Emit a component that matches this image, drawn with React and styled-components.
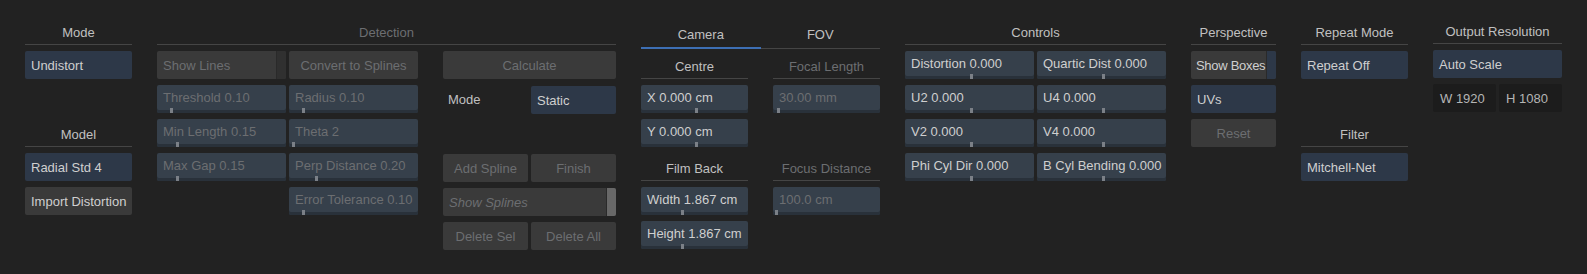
import React from "react";
import styled, { createGlobalStyle } from "styled-components";

const GlobalStyle = createGlobalStyle`
  html, body {
    margin: 0;
    padding: 0;
    background: #222222;
  }
  body {
    font-family: "Liberation Sans", Arial, sans-serif;
    font-size: 13px;
    color: #d0d0d0;
  }
`;

const C = {
  blue: "#2d3848",
  gray: "#3a3a3a",
  slider: "#36404b",
  track: "#29313a",
  text: "#cfcfcf",
  label: "#c0c0c0",
  dim: "#6c6e71",
  line: "#454545",
};

const Page = styled.div`
  display: flex;
  align-items: flex-start;
  gap: 25px;
  padding: 22px 25px 0;
  min-height: 274px;
  box-sizing: border-box;
`;

const Section = styled.div`
  width: ${(p) => p.$w}px;
  display: flex;
  flex-direction: column;
  gap: 6px;
  margin-top: ${(p) => p.$shift || 0}px;
`;

const Header = styled.div`
  line-height: 20px;
  padding-top: 1px;
  padding-bottom: 1px;
  border-bottom: 1px solid ${C.line};
  text-align: center;
  color: ${(p) => (p.$dim ? C.dim : C.label)};
  margin-top: ${(p) => p.$mt || 0}px;
  white-space: nowrap;
`;

const Column = styled.div`
  width: ${(p) => p.$w}px;
  display: flex;
  flex-direction: column;
  gap: 6px;
`;

const Columns = styled.div`
  display: flex;
  gap: ${(p) => p.$gap}px;
  padding-top: ${(p) => p.$pt || 0}px;
`;

const Button = styled.div`
  height: 28px;
  line-height: 29px;
  border-radius: 2px;
  padding: 0 6px;
  box-sizing: border-box;
  background: ${(p) => (p.$tone === "blue" ? C.blue : C.gray)};
  color: ${(p) => (p.$dim ? C.dim : C.text)};
  text-align: ${(p) => (p.$center ? "center" : "left")};
  white-space: nowrap;
  overflow: hidden;
  flex: ${(p) => (p.$grow ? 1 : "none")};
  width: ${(p) => (p.$w ? `${p.$w}px` : "auto")};
`;

const Toggle = styled.div`
  height: 28px;
  display: flex;
  border-radius: 2px;
  overflow: hidden;
  background: ${C.gray};
`;

const ToggleLabel = styled.div`
  flex: 1;
  line-height: 29px;
  padding: 0 ${(p) => (p.$tight ? "0 0 5px" : "6px")};
  letter-spacing: ${(p) => (p.$tight ? "-0.3px" : "0")};
  white-space: nowrap;
  overflow: hidden;
  color: ${(p) => (p.$dim ? C.dim : C.text)};
  font-style: ${(p) => (p.$italic ? "italic" : "normal")};
`;

const ToggleIndicator = styled.div`
  width: 9px;
  flex: none;
  border-left: 1px solid #2a2a2a;
  background: ${(p) => p.$color};
`;

const Slider = styled.div`
  position: relative;
  height: 28px;
  border-radius: 2px;
  background: ${C.slider};
  box-shadow: inset 0 -3px 0 ${C.track};
  padding: 0 6px;
  box-sizing: border-box;
  overflow: hidden;
`;

const SliderText = styled.div`
  line-height: 26px;
  white-space: nowrap;
  color: ${(p) => (p.$dim ? C.dim : C.text)};
`;

const Handle = styled.div`
  position: absolute;
  bottom: 0;
  width: 3px;
  height: 5px;
  background: #7b8087;
`;

const Row = styled.div`
  display: flex;
  gap: 3px;
  justify-content: space-between;
  align-items: center;
`;

const InlineLabel = styled.div`
  line-height: 29px;
  padding-left: 5px;
  color: ${C.label};
`;

const Spacer = styled.div`
  height: 28px;
`;

const TabBar = styled.div`
  display: flex;
  box-shadow: inset 0 -1px 0 ${C.line};
`;

const Tab = styled.div`
  flex: 1;
  text-align: center;
  padding: 3px 0 2px;
  line-height: 20px;
  color: ${C.label};
  border-bottom: 2px solid ${(p) => (p.$active ? "#3d6fb4" : "transparent")};
`;

const ControlsGrid = styled.div`
  display: grid;
  grid-template-columns: 129px 129px;
  column-gap: 3px;
  row-gap: 6px;
`;

const ResBox = styled.div`
  flex: 1;
  height: 28px;
  line-height: 29px;
  padding: 0 7px;
  border-radius: 2px;
  background: #1c1c1c;
  color: #b5b5b5;
`;

function ValueSlider({ label, value, dim }) {
  return (
    <Slider>
      <SliderText $dim={dim}>{label}</SliderText>
      <Handle style={{ left: `${value * 100}%` }} />
    </Slider>
  );
}

const detectionA = [
  ["Threshold 0.10", 0.1],
  ["Min Length 0.15", 0.15],
  ["Max Gap 0.15", 0.15],
];
const detectionB = [
  ["Radius 0.10", 0.1],
  ["Theta 2", 0.02],
  ["Perp Distance 0.20", 0.2],
  ["Error Tolerance 0.10", 0.1],
];
const controls = [
  "Distortion 0.000",
  "Quartic Dist 0.000",
  "U2 0.000",
  "U4 0.000",
  "V2 0.000",
  "V4 0.000",
  "Phi Cyl Dir 0.000",
  "B Cyl Bending 0.000",
];

export default function App() {
  return (
    <>
      <GlobalStyle />
      <Page>
        <Section $w={107}>
          <Header>Mode</Header>
          <Button $tone="blue">Undistort</Button>
          <Header $mt={39}>Model</Header>
          <Button $tone="blue">Radial Std 4</Button>
          <Button $center>Import Distortion</Button>
        </Section>

        <Section $w={459}>
          <Header $dim>Detection</Header>
          <Columns $gap={25}>
            <Columns $gap={3}>
              <Column $w={129}>
                <Toggle>
                  <ToggleLabel $dim>Show Lines</ToggleLabel>
                  <ToggleIndicator $color="#303030" />
                </Toggle>
                {detectionA.map(([l, v]) => (
                  <ValueSlider key={l} label={l} value={v} dim />
                ))}
              </Column>
              <Column $w={129}>
                <Button $center $dim>
                  Convert to Splines
                </Button>
                {detectionB.map(([l, v]) => (
                  <ValueSlider key={l} label={l} value={v} dim />
                ))}
              </Column>
            </Columns>
            <Column $w={173}>
              <Button $center $dim>
                Calculate
              </Button>
              <Row>
                <InlineLabel>Mode</InlineLabel>
                <Button $tone="blue" $w={85}>
                  Static
                </Button>
              </Row>
              <Spacer />
              <Row>
                <Button $center $dim $grow>
                  Add Spline
                </Button>
                <Button $center $dim $grow>
                  Finish
                </Button>
              </Row>
              <Toggle>
                <ToggleLabel $dim $italic>
                  Show Splines
                </ToggleLabel>
                <ToggleIndicator $color="#686868" />
              </Toggle>
              <Row>
                <Button $center $dim $grow>
                  Delete Sel
                </Button>
                <Button $center $dim $grow>
                  Delete All
                </Button>
              </Row>
            </Column>
          </Columns>
        </Section>

        <Section $w={239}>
          <TabBar>
            <Tab $active>Camera</Tab>
            <Tab>FOV</Tab>
          </TabBar>
          <Columns $gap={25} $pt={1}>
            <Column $w={107}>
              <Header>Centre</Header>
              <ValueSlider label="X 0.000 cm" value={0.5} />
              <ValueSlider label="Y 0.000 cm" value={0.5} />
              <Header $mt={5}>Film Back</Header>
              <ValueSlider label="Width 1.867 cm" value={0.37} />
              <ValueSlider label="Height 1.867 cm" value={0.37} />
            </Column>
            <Column $w={107}>
              <Header $dim>Focal Length</Header>
              <ValueSlider label="30.00 mm" value={0.04} dim />
              <Header $dim $mt={39}>
                Focus Distance
              </Header>
              <ValueSlider label="100.0 cm" value={0.015} dim />
            </Column>
          </Columns>
        </Section>

        <Section $w={261}>
          <Header>Controls</Header>
          <ControlsGrid>
            {controls.map((l) => (
              <ValueSlider key={l} label={l} value={0.5} />
            ))}
          </ControlsGrid>
        </Section>

        <Section $w={85}>
          <Header>Perspective</Header>
          <Toggle>
            <ToggleLabel $tight>Show Boxes</ToggleLabel>
            <ToggleIndicator $color={C.blue} />
          </Toggle>
          <Button $tone="blue">UVs</Button>
          <Button $center $dim>
            Reset
          </Button>
        </Section>

        <Section $w={107}>
          <Header>Repeat Mode</Header>
          <Button $tone="blue">Repeat Off</Button>
          <Header $mt={39}>Filter</Header>
          <Button $tone="blue">Mitchell-Net</Button>
        </Section>

        <Section $w={129} $shift={-1}>
          <Header>Output Resolution</Header>
          <Button $tone="blue">Auto Scale</Button>
          <Row>
            <ResBox>W 1920</ResBox>
            <ResBox>H 1080</ResBox>
          </Row>
        </Section>
      </Page>
    </>
  );
}
